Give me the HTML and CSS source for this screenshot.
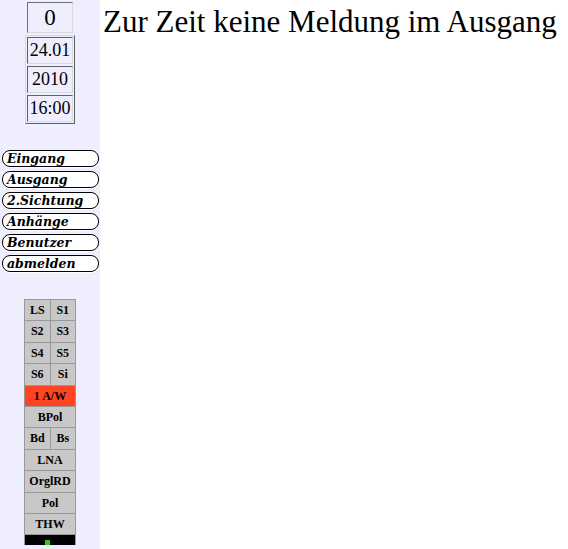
FILE: index.html
```html
<!DOCTYPE html>
<html lang="de">
<head>
<meta charset="utf-8">
<link rel="stylesheet" href="styles.css">
</head>
<body>
<div class="side">
  <div class="counter">0</div>
  <div class="dates">
    <div class="date">24.01</div>
    <div class="date">2010</div>
    <div class="date">16:00</div>
  </div>
  <nav class="menu">
    <div class="pill">Eingang</div>
    <div class="pill">Ausgang</div>
    <div class="pill">2.Sichtung</div>
    <div class="pill">Anhänge</div>
    <div class="pill">Benutzer</div>
    <div class="pill">abmelden</div>
  </nav>
  <div class="units">
    <div class="row"><div class="cell">LS</div><div class="cell">S1</div></div>
    <div class="row"><div class="cell">S2</div><div class="cell">S3</div></div>
    <div class="row"><div class="cell">S4</div><div class="cell">S5</div></div>
    <div class="row"><div class="cell">S6</div><div class="cell">Si</div></div>
    <div class="row"><div class="cell wide alert">1 A/W</div></div>
    <div class="row"><div class="cell wide">BPol</div></div>
    <div class="row"><div class="cell">Bd</div><div class="cell">Bs</div></div>
    <div class="row"><div class="cell wide">LNA</div></div>
    <div class="row"><div class="cell wide">OrglRD</div></div>
    <div class="row"><div class="cell wide">Pol</div></div>
    <div class="row"><div class="cell wide">THW</div></div>
    <div class="status"><span class="led"></span></div>
  </div>
</div>
<main class="content">
  <h1 class="msg">Zur Zeit keine Meldung im Ausgang</h1>
</main>
</body>
</html>
```
FILE: styles.css
```css
html, body { margin: 0; padding: 0; height: 100%; }
body {
  display: flex;
  background: #ffffff;
  font-family: "Liberation Serif", "DejaVu Serif", serif;
  color: #000;
}
.side {
  width: 100px;
  flex: none;
  background: #eeeeff;
  display: flex;
  flex-direction: column;
  align-items: center;
  min-height: 549px;
}
.counter {
  margin-top: 2px;
  width: 44px;
  height: 29px;
  border: 1px solid;
  border-color: #707070 #d8d8d8 #d8d8d8 #707070;
  font-size: 23px;
  line-height: 29px;
  text-align: center;
}
.dates {
  margin-top: 2px;
  width: 48px;
  border: 1px solid;
  border-color: #d8d8d8 #606060 #606060 #d8d8d8;
  padding: 1px 0;
  display: flex;
  flex-direction: column;
  gap: 2px;
  align-items: center;
}
.date {
  width: 44px;
  height: 25px;
  border: 1px solid;
  border-color: #606060 #d8d8d8 #d8d8d8 #606060;
  font-size: 18px;
  line-height: 25px;
  text-align: center;
}
.menu {
  margin-top: 26px;
  align-self: stretch;
  display: flex;
  flex-direction: column;
  gap: 4px;
  padding: 0 1px 0 2px;
}
.pill {
  height: 15px;
  border: 1px solid #000;
  border-radius: 8px;
  background: #fff;
  font-family: "DejaVu Serif", serif;
  font-weight: bold;
  font-style: italic;
  font-size: 12.5px;
  line-height: 15px;
  padding-left: 4px;
  box-shadow: 0 1px 0 #fff;
}
.units {
  margin-top: 27px;
  width: 50px;
  border: 1px solid #999;
  border-bottom: none;
  display: flex;
  flex-direction: column;
}
.row {
  display: flex;
  height: 20.4px;
  border-bottom: 1px solid #999;
}
.cell {
  flex: 1;
  background: #c8c8c8;
  font-weight: bold;
  font-size: 12px;
  line-height: 20px;
  text-align: center;
}
.cell + .cell { border-left: 1px solid #999; }
.cell.alert { background: #ff4422; }
.status {
  height: 10px;
  background: #000;
  display: flex;
  justify-content: center;
  align-items: flex-end;
}
.led {
  width: 5px;
  height: 5px;
  margin-right: 6px;
  background: #33cc00;
}
.content { flex: 1; padding-left: 3px; }
.msg {
  margin: 0;
  font-weight: normal;
  font-size: 31px;
  line-height: 44px;
}
```
